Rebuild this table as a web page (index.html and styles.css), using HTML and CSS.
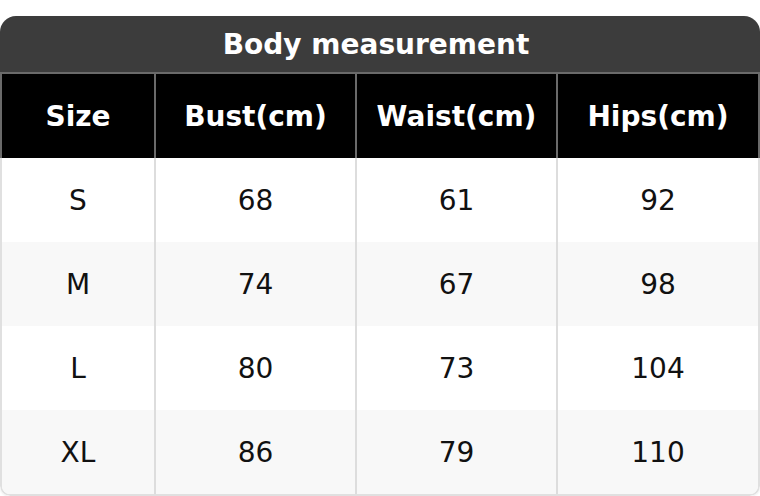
FILE: index.html
```html
<!DOCTYPE html>
<html>
<head>
<meta charset="utf-8">
<link rel="stylesheet" href="styles.css">
</head>
<body>
<div class="card">
  <div class="title">Body measurement</div>
  <div class="head">
    <div class="cell">Size</div>
    <div class="cell">Bust(cm)</div>
    <div class="cell">Waist(cm)</div>
    <div class="cell">Hips(cm)</div>
  </div>
  <div class="rows">
    <div class="row">
      <div class="cell">S</div><div class="cell">68</div><div class="cell">61</div><div class="cell">92</div>
    </div>
    <div class="row alt">
      <div class="cell">M</div><div class="cell">74</div><div class="cell">67</div><div class="cell">98</div>
    </div>
    <div class="row">
      <div class="cell">L</div><div class="cell">80</div><div class="cell">73</div><div class="cell">104</div>
    </div>
    <div class="row alt">
      <div class="cell">XL</div><div class="cell">86</div><div class="cell">79</div><div class="cell">110</div>
    </div>
  </div>
</div>
</body>
</html>
```
FILE: styles.css
```css
* { box-sizing: border-box; }
html, body { margin: 0; padding: 0; background: #fff; }
body {
  font-family: "DejaVu Sans", Verdana, sans-serif;
  padding-top: 16px;
}
.card {
  width: 760px;
  border-radius: 16px 16px 10px 10px;
  overflow: hidden;
  box-shadow: 0 1px 2px rgba(0,0,0,0.08);
}
.title {
  height: 56px;
  padding-right: 8px;
  background: #3c3c3c;
  color: #fff;
  font-weight: bold;
  font-size: 28px;
  display: flex;
  align-items: center;
  justify-content: center;
}
.head, .row {
  display: grid;
  grid-template-columns: 152px 201px 201px 202px;
}
.head {
  background: #000;
  color: #fff;
  font-weight: bold;
  font-size: 28px;
  border: 2px solid #6a6a6a;
  border-bottom: none;
}
.cell {
  height: 84px;
  display: flex;
  align-items: center;
  justify-content: center;
}
.cell + .cell { border-left: 2px solid #ddd; }
.head .cell + .cell { border-left-color: #6a6a6a; }
.rows {
  border: 2px solid #e0e0e0;
  border-top: none;
  border-radius: 0 0 10px 10px;
  overflow: hidden;
}
.row {
  background: #fff;
  color: #111;
  font-size: 28px;
}
.row.alt { background: #f8f8f8; }
```
